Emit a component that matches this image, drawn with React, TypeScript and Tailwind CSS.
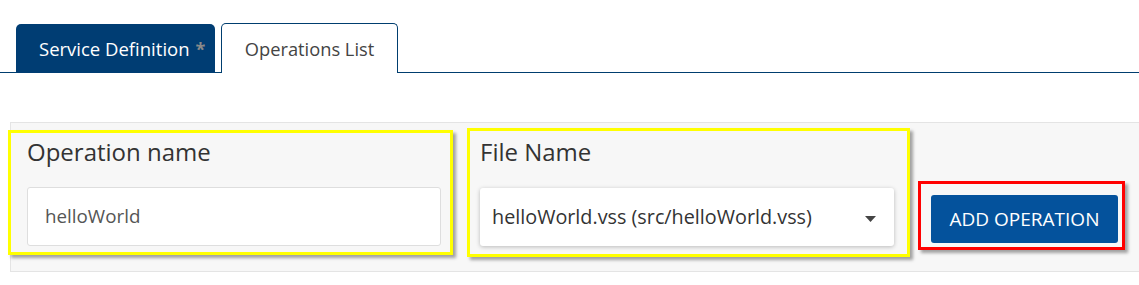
import React from "react";

export default function App() {
  const font = { fontFamily: '"Open Sans", "Noto Sans", sans-serif' };
  return (
    <div className="w-[1139px] h-[285px] bg-white overflow-hidden" style={font}>
      {/* Tabs */}
      <div className="flex items-end gap-[6px] pl-[16px] pt-[23px] border-b border-[#003e6f] h-[73px]">
        <div className="h-[49px] w-[199px] rounded-t-[5px] bg-[#003d73] flex items-center pl-[23px] -mb-px">
          <span className="text-white text-[18.5px]">Service Definition</span>
          <span className="text-[#8a8a8a] text-[18px] font-bold ml-[6px] mt-[2px]">*</span>
        </div>
        <div className="h-[50px] w-[177px] rounded-t-[5px] border border-b-0 border-[#003e6f] bg-white flex items-center justify-center -mb-px">
          <span className="text-[#444] text-[18.3px]">Operations List</span>
        </div>
      </div>

      {/* Panel */}
      <div className="mt-[49px] ml-[10px] h-[150px] bg-[#f7f7f7] border border-r-0 border-[#e4e4e4] flex items-start">
        {/* Operation name */}
        <div className="ml-[-3px] mt-[7px] w-[445px] h-[125px] border-[3px] border-[#ffff00] shadow-[3px_3px_3px_rgba(0,0,0,0.35)] pl-[16px] pr-[9px] flex flex-col">
          <div className="mt-[3px] text-[24px] text-[#333] leading-[32px]">Operation name</div>
          <div className="mt-[19px] h-[59px] bg-white border border-[#dedede] rounded-[3px] flex items-center pl-[17px]">
            <span className="text-[18.8px] text-[#555]">helloWorld</span>
          </div>
        </div>
        {/* File Name */}
        <div className="ml-[14px] mt-[5px] w-[443px] h-[129px] border-[3px] border-[#ffff00] shadow-[3px_3px_3px_rgba(0,0,0,0.35)] pl-[10px] pr-[13px] flex flex-col">
          <div className="mt-[5px] text-[24px] text-[#333] leading-[32px]">File Name</div>
          <div className="mt-[20px] h-[58px] bg-white rounded-[3px] shadow-[0_1px_4px_rgba(0,0,0,0.25)] flex items-center pl-[12px] pr-[18px]">
            <span className="text-[19.8px] text-[#333] flex-1">helloWorld.vss (src/helloWorld.vss)</span>
            <svg width="11" height="6" viewBox="0 0 11 6" className="mt-[4px]">
              <path d="M0 0 L11 0 L5.5 6 Z" fill="#444" />
            </svg>
          </div>
        </div>
        {/* Add operation */}
        <div className="ml-[8px] mt-[58px] w-[207px] h-[69px] border-[3px] border-[#ff0000] shadow-[3px_3px_3px_rgba(0,0,0,0.35)] pl-[10px] pt-[11px]">
          <button className="w-[187px] h-[48px] bg-[#04529c] rounded-[3px] text-white text-[19px]">
            ADD OPERATION
          </button>
        </div>
      </div>
    </div>
  );
}
